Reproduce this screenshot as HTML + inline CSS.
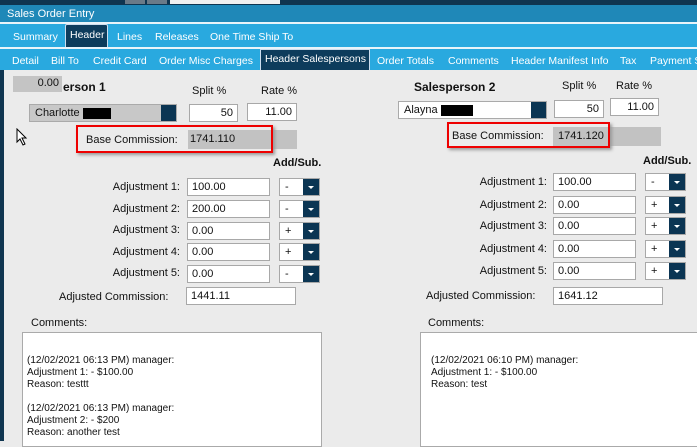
<!DOCTYPE html>
<html><head><style>
*{margin:0;padding:0;box-sizing:border-box}
body{width:697px;height:441px;overflow:hidden;position:relative;background:#ebebeb;font-family:"Liberation Sans",sans-serif;font-size:11px;color:#111}
.a{position:absolute;white-space:nowrap}
.w{color:#fff;font-size:10.5px}
.inp{position:absolute;background:#fff;border:1px solid #a8a8a8;height:18px;padding:2px 4px;font-size:11px}
.sel{position:absolute;background:#fff;border:1px solid #a8a8a8;height:18px;width:41px;font-size:11px;padding:2px 5px}
.sel b{position:absolute;right:0;top:0;width:16px;height:16px;background:#0b3553}
.sel b:after{content:"";position:absolute;left:5px;top:7px;border-left:3px solid transparent;border-right:3px solid transparent;border-top:3px solid #fff}
.lbl{position:absolute;text-align:right;font-size:11px}
.red{position:absolute;border:2px solid #e00;box-shadow:2px 2px 3px #999;z-index:5}
</style></head><body>
<div class="a" style="left:0;top:0;width:697px;height:5px;background:#0f3550"></div>
<div class="a" style="left:125px;top:0;width:20px;height:4px;background:#6a7a88"></div>
<div class="a" style="left:147px;top:0;width:20px;height:4px;background:#6a7a88"></div>
<div class="a" style="left:170px;top:0;width:110px;height:4px;background:#f0f0f0"></div>
<div class="a" style="left:0;top:5px;width:697px;height:17px;background:#1f88b8"></div>
<div class="a w" style="left:7px;top:8px;font-size:11px">Sales Order Entry</div>
<div class="a" style="left:0;top:22px;width:697px;height:2px;background:#e8f4fa"></div>
<div class="a" style="left:0;top:24px;width:697px;height:23px;background:#29a9df"></div>
<div class="a" style="left:65px;top:24px;width:43px;height:23px;background:#0d3c5c;border:1px solid #cde;border-bottom:none;border-radius:2px 2px 0 0"></div>
<div class="a w" style="left:13px;top:31px">Summary</div>
<div class="a w" style="left:70px;top:29px">Header</div>
<div class="a w" style="left:117px;top:31px">Lines</div>
<div class="a w" style="left:155px;top:31px">Releases</div>
<div class="a w" style="left:210px;top:31px">One Time Ship To</div>
<div class="a" style="left:0;top:47px;width:697px;height:2px;background:#e8f4fa"></div>
<div class="a" style="left:0;top:49px;width:697px;height:21px;background:#29a9df"></div>
<div class="a" style="left:260px;top:49px;width:110px;height:21px;background:#0d3c5c;border:1px solid #cde;border-bottom:none"></div>
<div class="a w" style="left:12px;top:55px">Detail</div>
<div class="a w" style="left:51px;top:55px">Bill To</div>
<div class="a w" style="left:93px;top:55px">Credit Card</div>
<div class="a w" style="left:159px;top:55px">Order Misc Charges</div>
<div class="a w" style="left:265px;top:53px">Header Salespersons</div>
<div class="a w" style="left:377px;top:55px">Order Totals</div>
<div class="a w" style="left:448px;top:55px">Comments</div>
<div class="a w" style="left:511px;top:55px">Header Manifest Info</div>
<div class="a w" style="left:620px;top:55px">Tax</div>
<div class="a w" style="left:650px;top:55px">Payment S</div>
<div class="a" style="left:0;top:70px;width:4px;height:371px;background:#0f3550"></div>

<!-- left -->
<div class="a" style="left:13px;top:76px;width:49px;height:16px;background:#c4c4c4;text-align:right;padding:1px 3px">0.00</div>
<div class="a" style="left:63px;top:80px;font-weight:bold;font-size:12px">erson 1</div>
<div class="a" style="left:192px;top:85px;font-size:11px">Split %</div>
<div class="a" style="left:261px;top:85px;font-size:11px">Rate %</div>
<div class="a" style="left:29px;top:104px;width:148px;height:18px;background:#c8c8c8;border:1px solid #aaa;padding:2px 5px">Charlotte <span style="display:inline-block;width:28px;height:11px;background:#000;vertical-align:middle"></span><b style="position:absolute;right:0;top:0;width:15px;height:16px;background:#0b3553"></b></div>
<div class="inp" style="left:189px;top:104px;width:49px;text-align:right">50</div>
<div class="inp" style="left:247px;top:103px;width:50px;text-align:right">11.00</div>
<div class="a" style="left:86px;top:134px;font-size:11px">Base Commission:</div>
<div class="a" style="left:188px;top:130px;width:109px;height:19px;background:#c2c2c2;padding:3px 2px">1741.110</div>
<div class="red" style="left:76px;top:125px;width:197px;height:28px"></div>
<svg class="a" style="left:16px;top:128px" width="12" height="18"><path d="M1 1 L1 14 L4 11 L7 17 L9 16 L6 10 L10 10 Z" fill="#fff" stroke="#000"/></svg>
<div class="a" style="left:273px;top:157px;font-weight:bold;font-size:11px">Add/Sub.</div>
<div class="lbl" style="left:60px;top:181px;width:120px">Adjustment 1:</div>
<div class="lbl" style="left:60px;top:203px;width:120px">Adjustment 2:</div>
<div class="lbl" style="left:60px;top:224px;width:120px">Adjustment 3:</div>
<div class="lbl" style="left:60px;top:246px;width:120px">Adjustment 4:</div>
<div class="lbl" style="left:60px;top:267px;width:120px">Adjustment 5:</div>
<div class="inp" style="left:187px;top:178px;width:83px">100.00</div>
<div class="inp" style="left:187px;top:200px;width:83px">200.00</div>
<div class="inp" style="left:187px;top:222px;width:83px">0.00</div>
<div class="inp" style="left:187px;top:243px;width:83px">0.00</div>
<div class="inp" style="left:187px;top:265px;width:83px">0.00</div>
<div class="sel" style="left:279px;top:178px">-<b></b></div>
<div class="sel" style="left:279px;top:200px">-<b></b></div>
<div class="sel" style="left:279px;top:222px">+<b></b></div>
<div class="sel" style="left:279px;top:243px">+<b></b></div>
<div class="sel" style="left:279px;top:265px">-<b></b></div>
<div class="a" style="left:59px;top:291px;font-size:11px">Adjusted Commission:</div>
<div class="inp" style="left:186px;top:287px;width:110px">1441.11</div>
<div class="a" style="left:31px;top:317px;font-size:11px">Comments:</div>
<div class="a" style="left:22px;top:332px;width:300px;height:115px;background:#fff;border:1px solid #aaa;padding:22px 4px 0;line-height:12px;font-size:10px;white-space:normal">(12/02/2021 06:13 PM) manager:<br>Adjustment 1: - $100.00<br>Reason: testtt<br><br>(12/02/2021 06:13 PM) manager:<br>Adjustment 2: - $200<br>Reason: another test</div>

<!-- right -->
<div class="a" style="left:414px;top:80px;font-weight:bold;font-size:12px">Salesperson 2</div>
<div class="a" style="left:562px;top:80px;font-size:11px">Split %</div>
<div class="a" style="left:616px;top:80px;font-size:11px">Rate %</div>
<div class="a" style="left:398px;top:101px;width:149px;height:18px;background:#fff;border:1px solid #aaa;padding:2px 5px">Alayna <span style="display:inline-block;width:32px;height:11px;background:#000;vertical-align:middle"></span><b style="position:absolute;right:0;top:0;width:15px;height:16px;background:#0b3553"></b></div>
<div class="inp" style="left:554px;top:100px;width:50px;text-align:right">50</div>
<div class="inp" style="left:610px;top:98px;width:49px;text-align:right">11.00</div>
<div class="a" style="left:452px;top:130px;font-size:11px">Base Commission:</div>
<div class="a" style="left:553px;top:127px;width:108px;height:19px;background:#c2c2c2;padding:3px 5px">1741.120</div>
<div class="red" style="left:447px;top:122px;width:163px;height:26px"></div>
<div class="a" style="left:643px;top:155px;font-weight:bold;font-size:11px">Add/Sub.</div>
<div class="lbl" style="left:427px;top:176px;width:120px">Adjustment 1:</div>
<div class="lbl" style="left:427px;top:199px;width:120px">Adjustment 2:</div>
<div class="lbl" style="left:427px;top:220px;width:120px">Adjustment 3:</div>
<div class="lbl" style="left:427px;top:243px;width:120px">Adjustment 4:</div>
<div class="lbl" style="left:427px;top:265px;width:120px">Adjustment 5:</div>
<div class="inp" style="left:553px;top:173px;width:83px">100.00</div>
<div class="inp" style="left:553px;top:196px;width:83px">0.00</div>
<div class="inp" style="left:553px;top:217px;width:83px">0.00</div>
<div class="inp" style="left:553px;top:240px;width:83px">0.00</div>
<div class="inp" style="left:553px;top:262px;width:83px">0.00</div>
<div class="sel" style="left:645px;top:173px">-<b></b></div>
<div class="sel" style="left:645px;top:196px">+<b></b></div>
<div class="sel" style="left:645px;top:217px">+<b></b></div>
<div class="sel" style="left:645px;top:240px">+<b></b></div>
<div class="sel" style="left:645px;top:262px">+<b></b></div>
<div class="a" style="left:426px;top:290px;font-size:11px">Adjusted Commission:</div>
<div class="inp" style="left:553px;top:287px;width:110px">1641.12</div>
<div class="a" style="left:428px;top:317px;font-size:11px">Comments:</div>
<div class="a" style="left:420px;top:332px;width:290px;height:115px;background:#fff;border:1px solid #aaa;padding:22px 10px 0;line-height:12px;font-size:10px;white-space:normal">(12/02/2021 06:10 PM) manager:<br>Adjustment 1: - $100.00<br>Reason: test</div>
</body></html>
